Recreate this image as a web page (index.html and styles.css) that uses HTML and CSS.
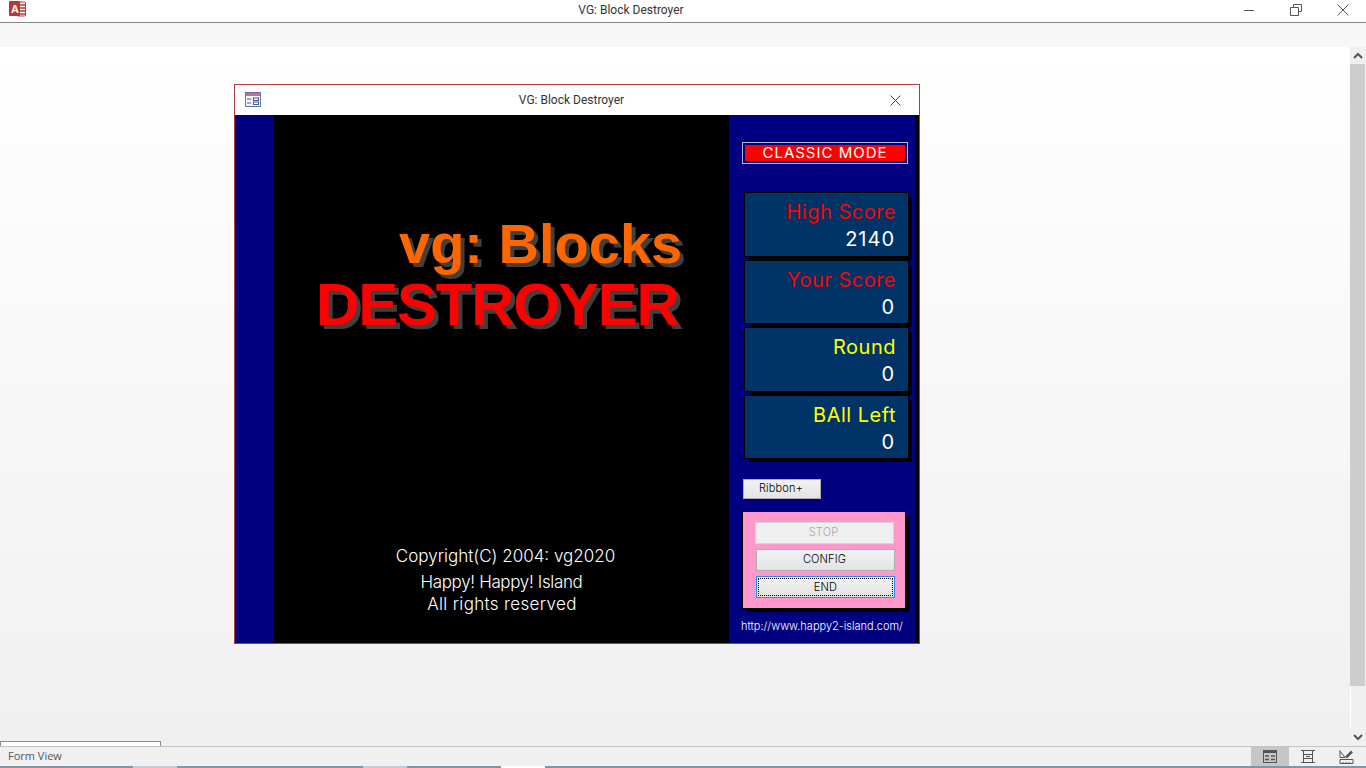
FILE: index.html
```html
<!DOCTYPE html>
<html lang="en">
<head>
<meta charset="utf-8">
<title>VG: Block Destroyer</title>
<link rel="stylesheet" href="styles.css">
</head>
<body>
<div class="app">
  <header class="titlebar">
    <svg class="app-icon" width="18" height="18" viewBox="0 0 18 18">
      <rect x="8" y="2" width="8.500" height="14" rx="1" fill="#fff" stroke="#b7373c"/>
      <path d="M10 5h6M10 8h6M10 11h6M10 14h6" stroke="#b7373c" stroke-width="1.500"/>
      <rect x="0" y="1" width="11" height="15" rx="1" fill="#b7373c"/>
      <text x="2" y="13" class="app-icon-letter">A</text>
    </svg>
    <span class="titlebar-text">VG: Block Destroyer</span>
    <div class="win-controls">
      <svg width="12" height="12" viewBox="0 0 12 12"><path d="M1 6.500h10" stroke="#555" fill="none"/></svg>
      <svg width="12" height="12" viewBox="0 0 12 12"><path d="M3.500 3V.5h8v7H9M.5 3.500h8v8h-8z" stroke="#555" fill="none"/></svg>
      <svg width="12" height="12" viewBox="0 0 12 12"><path d="M.5.5l11 11M11.500.5l-11 11" stroke="#555" fill="none"/></svg>
    </div>
  </header>
  <div class="ribbon"></div>
  <div class="body-row">
    <main class="workspace">
      <section class="form-window">
        <div class="form-title">
          <svg class="form-icon" width="16" height="15" viewBox="0 0 16 15">
            <rect x=".5" y=".5" width="15" height="14" fill="#f2f5fa" stroke="#64779c"/>
            <rect x="1" y="1" width="14" height="3" fill="#d8658f"/>
            <path d="M2 7h4M2 11h4" stroke="#4b5f86"/>
            <rect x="8.500" y="6" width="5" height="2.500" fill="#fff" stroke="#4b5f86"/>
            <rect x="8.500" y="10" width="5" height="2.500" fill="#fff" stroke="#4b5f86"/>
          </svg>
          <span class="form-title-text">VG: Block Destroyer</span>
          <svg class="form-close" width="11" height="11" viewBox="0 0 11 11"><path d="M.5.5l10 10M10.500.5l-10 10" stroke="#444" fill="none"/></svg>
        </div>
        <div class="form-body">
          <div class="side-strip"></div>
          <div class="stage">
            <div class="logo">
              <div class="logo-top">vg: Blocks</div>
              <div class="logo-bottom">DESTROYER</div>
            </div>
            <div class="credits">
              <div class="credit-line">Copyright(C) 2004: vg2020</div>
              <div class="credit-group">
                <div class="credit-tight">Happy! Happy! Island</div>
                <div class="credit-wide">All rights reserved</div>
              </div>
            </div>
          </div>
          <aside class="panel">
            <div class="mode-frame"><div class="mode">CLASSIC MODE</div></div>
            <div class="stats">
              <div class="stat"><div class="stat-label red">High Score</div><div class="stat-value">2140</div></div>
              <div class="stat"><div class="stat-label red">Your Score</div><div class="stat-value">0</div></div>
              <div class="stat"><div class="stat-label yellow">Round</div><div class="stat-value">0</div></div>
              <div class="stat"><div class="stat-label yellow">BAll Left</div><div class="stat-value">0</div></div>
            </div>
            <button class="btn ribbon-btn">Ribbon+</button>
            <div class="pink">
              <button class="btn action disabled">STOP</button>
              <button class="btn action shifted">CONFIG</button>
              <button class="btn action shifted focused"><span class="focus-ring">END</span></button>
            </div>
            <div class="url">http://www.happy2-island.com/</div>
          </aside>
          <div class="edge"></div>
        </div>
      </section>
    </main>
    <div class="scrollbar">
      <div class="scroll-btn">
        <svg width="10" height="7" viewBox="0 0 10 7"><path d="M1 6l4-4 4 4" stroke="#555" stroke-width="2" fill="none"/></svg>
      </div>
      <div class="scroll-thumb"></div>
      <div class="scroll-track"></div>
      <div class="scroll-btn">
        <svg width="10" height="7" viewBox="0 0 10 7"><path d="M1 1l4 4 4-4" stroke="#555" stroke-width="2" fill="none"/></svg>
      </div>
    </div>
  </div>
  <footer class="statusbar">
    <span class="status-text">Form View</span>
    <div class="views">
      <div class="view selected">
        <svg width="14" height="13" viewBox="0 0 14 13"><rect x=".5" y=".5" width="13" height="12" fill="none" stroke="#555"/><rect x="0" y="0" width="14" height="3" fill="#555"/><path d="M2 6h4M8 6h4M2 9.500h4M8 9.500h4" stroke="#555" stroke-width="1.500"/></svg>
      </div>
      <div class="view">
        <svg width="14" height="13" viewBox="0 0 14 13"><path d="M2.500.5h9v12h-9zM0 .5h14M0 12.500h14M2 4.500h10M2 8.500h10M5 6.500h4" stroke="#555" fill="none"/></svg>
      </div>
      <div class="view">
        <svg width="15" height="14" viewBox="0 0 15 14"><path d="M1 .5v7h5L1 1M1 9.500h13v4H1zM4 12v1.500M7 12v1.500M10 12v1.500" stroke="#555" fill="none"/><path d="M7 7.500l6-6" stroke="#555" stroke-width="2.500"/></svg>
      </div>
    </div>
  </footer>
  <div class="taskstrip">
    <span class="task task-a"></span>
    <span class="task task-b"></span>
    <span class="task task-c"></span>
  </div>
</div>
</body>
</html>
```
FILE: styles.css
```css
* { box-sizing: border-box; }
html, body { margin: 0; height: 100%; overflow: hidden; }
body { font-family: Roboto, "Liberation Sans", sans-serif; background: #fff; }
.app { width: 1366px; height: 768px; display: flex; flex-direction: column; }

.titlebar { height: 23px; flex: none; display: flex; align-items: center; justify-content: center; position: relative; background: #fff; border-bottom: 1px solid #83878a; padding: 0 104px 3px 0; }
.app-icon { position: absolute; left: 9px; top: 0; }
.app-icon-letter { font: bold 11px "Liberation Sans", sans-serif; fill: #fff; }
.titlebar-text { font-size: 12px; color: #333; }
.win-controls { position: absolute; right: 17px; top: 4px; display: flex; gap: 35px; }
.ribbon { height: 24px; flex: none; background: #f7f7f7; }

.body-row { flex: 1; display: flex; min-height: 0; }
.workspace { flex: 1; padding: 37px 0 0 234px; background: linear-gradient(#fff, #f0f0f0); }
.form-window { width: 686px; height: 560px; border: 1px solid #b03a40; background: #fff; display: flex; flex-direction: column; }
.form-title { height: 30px; flex: none; display: flex; align-items: center; justify-content: center; position: relative; padding-right: 11px; }
.form-title-text { font-size: 12px; color: #333; }
.form-icon { position: absolute; left: 10px; top: 7px; }
.form-close { position: absolute; right: 18px; top: 10px; }
.form-body { flex: 1; display: flex; min-height: 0; }
.side-strip { width: 39px; background: #000080; flex: none; }
.stage { width: 455px; flex: none; background: #000; display: flex; flex-direction: column; align-items: center; }
.logo { width: 100%; padding-top: 98px; font-family: "Liberation Sans", Arial, sans-serif; font-weight: bold; font-size: 60px; line-height: 61px; text-shadow: 4px 4px 0 #404040; }
.logo-top { color: #ff6600; font-size: 56px; margin-left: 125px; }
.logo-bottom { color: #f00; margin-left: 42px; letter-spacing: -1.200px; }
.credits { margin-top: 210px; color: #fff; font-family: Inter, "Noto Sans CJK JP", sans-serif; font-size: 17px; line-height: 22px; text-align: center; font-weight: 300; }
.credit-line { margin-left: 8px; }
.credit-group { margin-top: 4px; }
.credit-tight { letter-spacing: -.350px; }
.credit-wide { letter-spacing: .350px; margin-left: 1px; }

.panel { width: 186px; flex: none; background: #000080; display: flex; flex-direction: column; align-items: flex-start; padding: 27px 0 0 13px; font-family: Inter, "Noto Sans CJK JP", sans-serif; font-weight: 400; }
.mode-frame { width: 166px; height: 22px; padding: 2px; border: 1px solid #b4b4cc; }
.mode { height: 16px; background: #f00; color: #fff; font-size: 15px; line-height: 16px; text-align: center; letter-spacing: 1px; }
.stats { margin: 28px 0 0 2px; display: flex; flex-direction: column; gap: 3px; }
.stat { width: 165px; height: 64.600px; background: #003366; border: 1px solid #000; box-shadow: 4px 4px 0 -1px #000; padding: 6px 12px 0 0; text-align: right; }
.stat-label { font-size: 20px; line-height: 26px; letter-spacing: .500px; }
.stat-value { font-size: 20px; line-height: 28px; color: #fff; letter-spacing: 1px; padding-right: 1px; }
.red { color: #f00; }
.yellow { color: #ff0; }

.btn { display: block; padding: 0 2px 1px 0; font-family: Inter, "Noto Sans CJK JP", sans-serif; font-size: 11px; font-weight: 300; letter-spacing: .150px; color: #000; background: linear-gradient(#f2f2f2, #e3e3e3); border: 1px solid #adadad; }
.ribbon-btn { width: 78px; height: 20px; margin: 19.600px 0 0 1px; }
.pink { width: 164px; height: 98px; margin: 12px 0 0 0; background: #ff99cc; border: 1px solid #000; box-shadow: 4px 4px 0 -1px #000; padding: 10px 0 0 12px; display: flex; flex-direction: column; gap: 5px; }
.action { width: 139px; height: 22px; }
.disabled { background: #efefef; color: #a8a8a8; border-color: #d4d4d4; }
.shifted { margin-left: 1px; }
.focused { border-color: #2b8cf0; padding: 1px; }
.focus-ring { display: block; height: 100%; line-height: 17px; border: 1px dotted #000; }
.url { margin: 10px 0 0 -1px; color: #fff; font-size: 11px; font-weight: 300; line-height: 14px; white-space: nowrap; }
.edge { width: 4px; flex: none; background: #000; }

.scrollbar { width: 16px; flex: none; display: flex; flex-direction: column; background: #f0f0f0; }
.scroll-btn { height: 17px; flex: none; display: flex; align-items: center; justify-content: center; }
.scroll-thumb { height: 622px; flex: none; width: 15px; background: #cdcdcd; }
.scroll-track { flex: 1; border-left: 1px solid #fff; }

.statusbar { height: 20px; flex: none; position: relative; display: flex; align-items: center; justify-content: space-between; background: #f0f0f0; border-top: 1px solid #c4c4c4; padding-left: 8px; }
.statusbar::before { content: ""; position: absolute; left: 0; bottom: 100%; margin-bottom: 1px; width: 159px; height: 4px; background: #fff; border: 1px solid #8a8a8a; border-bottom: 0; }
.status-text { font-family: "Open Sans", sans-serif; font-size: 11px; color: #555; padding-bottom: 2px; }
.views { display: flex; height: 100%; padding-right: 1px; width: 115px; }
.view { width: 38px; height: 100%; display: flex; align-items: center; justify-content: center; }
.selected { background: #c6c6c6; }
.taskstrip { height: 2px; flex: none; position: relative; background: #8395a5; }
.task { position: absolute; top: 0; height: 2px; background: #c3ccd4; }
.task-a { left: 133px; width: 44px; }
.task-b { left: 363px; width: 44px; }
.task-c { left: 501px; width: 44px; background: #fff; }
```
